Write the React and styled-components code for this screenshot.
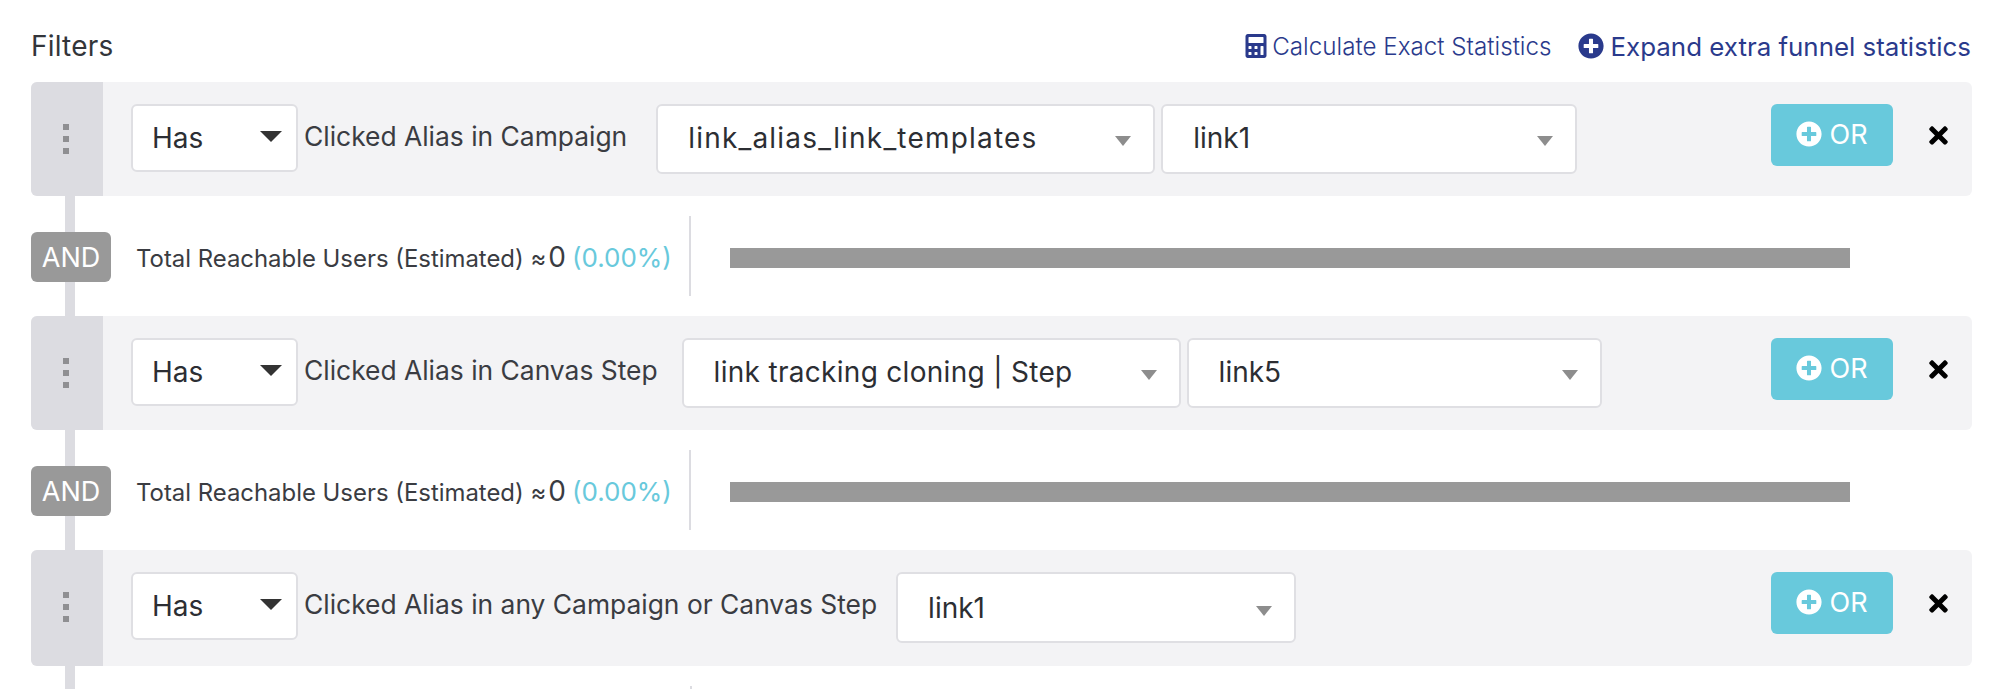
import React from "react";
import styled, { createGlobalStyle } from "styled-components";
import { FaCalculator, FaPlusCircle, FaTimes } from "react-icons/fa";

const Global = createGlobalStyle`
  html, body { margin: 0; padding: 0; background: #fff; overflow: hidden; }
  body { font-family: Inter, "Open Sans", sans-serif; color: #33353a; }
`;
const Page = styled.div`
  width: 2006px; height: 689px; overflow: hidden; padding: 0 34px 0 31px; box-sizing: border-box;
`;
const Header = styled.header`
  height: 82px; box-sizing: border-box; padding-top: 10px; display: flex; align-items: center; justify-content: space-between;
`;
const Title = styled.h2`
  margin: 0; font-size: 28px; letter-spacing: .2px; font-weight: 400; line-height: 1; color: #33353a;
`;
const Links = styled.div`
  display: flex; align-items: center; gap: 26px; margin: 0 1px 0 0;
`;
const Link = styled.a`
  display: flex; align-items: center; gap: ${p => p.$gap}px; color: #2a3a8c;
  font-size: ${p => p.$size}px; font-weight: ${p => p.$weight};
  svg { font-size: ${p => p.$icon}px; flex: none; }
`;
const Card = styled.section`
  display: flex; height: ${p => p.$tall ? 116 : 114}px; background: #f3f3f5; border-radius: 6px; overflow: hidden;
`;
const Handle = styled.div`
  width: 72px; flex: none; background: #dcdce1; display: flex; flex-direction: column; align-items: center; gap: 6px;
  padding: 42px 3px 0 0; box-sizing: border-box;
  i { width: 6px; height: 6px; background: #8f8f92; display: block; }
`;
const Body = styled.div`
  flex: 1; display: flex; align-items: flex-start; padding: 22px 0 0 28px; min-width: 0;
`;
const Select = styled.div`
  width: ${p => p.$w}px; height: ${p => p.$h}px; flex: none; box-sizing: border-box; background: #fff;
  border: 2px solid #dfdfe3; border-radius: 6px; display: flex; align-items: center; justify-content: space-between;
  padding: 0 ${p => p.$pr}px ${p => p.$pb}px ${p => p.$pl}px; font-size: 28px; color: #2c2e33; margin-left: ${p => p.$ml || 0}px;
  letter-spacing: ${p => p.$track || 0}px;
`;
const Caret = styled.span`
  width: 0; height: 0; flex: none;
  border-left: ${p => p.$dark ? 11 : 8}px solid transparent; border-right: ${p => p.$dark ? 11 : 8}px solid transparent;
  border-top: ${p => p.$dark ? 11 : 10}px solid ${p => p.$dark ? "#333" : "#8d8d8d"};
  margin-top: ${p => p.$dark ? -4 : 6}px;
`;
const Label = styled.span`
  font-size: 26.4px; color: #3a3c42; margin: 0 ${p => p.$mr}px 0 6px; line-height: 64px; white-space: nowrap; flex: none;
`;
const Actions = styled.div`
  margin-left: auto; display: flex; align-items: center;
`;
const OrButton = styled.button`
  width: 122px; height: 62px; border: 0; border-radius: 6px; background: #68c9dc; color: #fff; font: 400 27px Inter, sans-serif;
  display: flex; align-items: center; justify-content: center; gap: 7px; padding: 0 0 2px;
  svg { font-size: 26px; }
`;
const Close = styled.span`
  width: 79px; box-sizing: border-box; padding-left: 12px; display: flex; justify-content: center; color: #000; font-size: 27px; line-height: 0;
`;
const Connector = styled.div`
  position: relative; height: 120px; display: flex; align-items: center;
  &::before { content: ""; position: absolute; left: 34px; top: 0; bottom: 0; width: 10px; background: #dcdce1; }
`;
const And = styled.span`
  position: relative; width: 80px; height: 50px; flex: none; background: #999; color: #fff; border-radius: 6px; margin-top: 2px;
  display: flex; align-items: center; justify-content: center; font-size: 27px;
`;
const Stats = styled.div`
  display: flex; align-items: baseline; margin-left: 25px; width: 553px; flex: none; font-size: 23.9px; color: #3a3c42; white-space: nowrap; margin-top: 2px;
`;
const Zero = styled.span`
  font-size: 28px; margin-left: 2px;
`;
const Percent = styled.span`
  font-size: 26px; margin-left: 6px; color: #68c9dc;
`;
const Divider = styled.div`
  width: 2px; height: 80px; background: #dcdce1; flex: none;
`;
const Bar = styled.div`
  width: 1120px; height: 20px; background: #999; margin: 4px 0 0 39px; flex: none;
`;
const Tail = styled.div`
  position: relative; height: 23px;
  &::before { content: ""; position: absolute; left: 34px; top: 0; bottom: 0; width: 10px; background: #dcdce1; }
  &::after { content: ""; position: absolute; left: 659px; top: 20px; bottom: 0; width: 2px; background: #dcdce1; }
`;

const rows = [
  { label: "Clicked Alias in Campaign", mr: 29, selects: [{ t: "link_alias_link_templates", w: 499, track: 1.2 }, { t: "link1", w: 416 }] },
  { label: "Clicked Alias in Canvas Step", mr: 24, selects: [{ t: "link tracking cloning | Step", w: 499, track: 0.3 }, { t: "link5", w: 415 }] },
  { label: "Clicked Alias in any Campaign or Canvas Step", mr: 19, tall: true, selects: [{ t: "link1", w: 400 }] },
];

function Row({ r }) {
  return (
    <Card $tall={r.tall}>
      <Handle><i /><i /><i /></Handle>
      <Body>
        <Select $w={167} $h={68} $pl={19} $pr={14} $pb={0}>Has<Caret $dark /></Select>
        <Label $mr={r.mr}>{r.label}</Label>
        {r.selects.map((s, i) => (
          <Select key={s.t} $w={s.w} $h={r.tall ? 71 : 70} $pl={30} $pr={22} $pb={r.tall ? 0 : 2} $ml={i ? 6 : 0} $track={s.track}>{s.t}<Caret /></Select>
        ))}
        <Actions>
          <OrButton><FaPlusCircle />OR</OrButton>
          <Close><FaTimes /></Close>
        </Actions>
      </Body>
    </Card>
  );
}
function Link2() {
  return (
    <Connector>
      <And>AND</And>
      <Stats>Total Reachable Users (Estimated) ≈<Zero>0</Zero><Percent>(0.00%)</Percent></Stats>
      <Divider />
      <Bar />
    </Connector>
  );
}

export default function App() {
  return (
    <Page>
      <Global />
      <Header>
        <Title>Filters</Title>
        <Links>
          <Link $size={24.2} $weight={300} $gap={4} $icon={24}><FaCalculator />Calculate Exact Statistics</Link>
          <Link $size={25.9} $weight={400} $gap={7} $icon={26}><FaPlusCircle />Expand extra funnel statistics</Link>
        </Links>
      </Header>
      <Row r={rows[0]} />
      <Link2 />
      <Row r={rows[1]} />
      <Link2 />
      <Row r={rows[2]} />
      <Tail />
    </Page>
  );
}
